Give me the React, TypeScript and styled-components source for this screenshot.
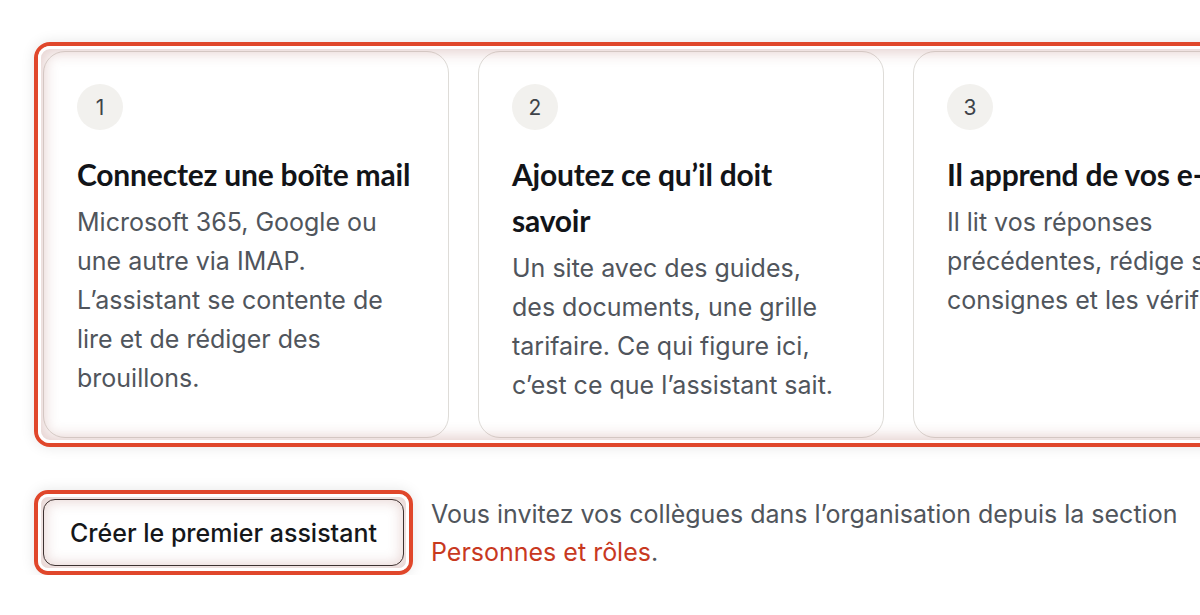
import React from "react";
import styled, { createGlobalStyle } from "styled-components";

const GlobalStyle = createGlobalStyle`
  html, body {
    margin: 0;
    padding: 0;
    background: #ffffff;
    overflow: hidden;
  }
  body {
    font-family: Inter, "Liberation Sans", sans-serif;
  }
`;

const steps = [
  {
    n: 1,
    title: "Connectez une boîte mail",
    text: "Microsoft 365, Google ou une autre via IMAP. L’assistant se contente de lire et de rédiger des brouillons.",
  },
  {
    n: 2,
    title: "Ajoutez ce qu’il doit savoir",
    text: "Un site avec des guides, des documents, une grille tarifaire. Ce qui figure ici, c’est ce que l’assistant sait.",
  },
  {
    n: 3,
    title: "Il apprend de vos e-mails",
    text: "Il lit vos réponses précédentes, rédige ses consignes et les vérifie.",
  },
];

const Page = styled.main`
  padding: 42px 0 0 34px;
  width: 1400px;
`;

const Highlight = styled.div<{ $radius: number }>`
  position: relative;
  display: inline-block;
  flex-shrink: 0;
  border: 4px solid #e0472b;
  border-radius: ${(p) => p.$radius}px;
  padding: 5px;
  box-shadow: 0 0 14px rgba(0, 0, 0, 0.1);
  &::after {
    content: "";
    position: absolute;
    inset: 0;
    border-radius: ${(p) => p.$radius - 4}px;
    pointer-events: none;
    box-shadow: inset 0 0 0 3px #ffffff, inset 0 0 14px 7px rgba(165, 95, 85, 0.28);
  }
`;

const Steps = styled.div`
  display: grid;
  grid-template-columns: repeat(3, 406px);
  gap: 29px;
`;

const Card = styled.section`
  background: #ffffff;
  border: 1px solid #dedcd8;
  border-radius: 22px;
  padding: 32px 34px 32px 33px;
`;

const Num = styled.div`
  width: 46px;
  height: 46px;
  border-radius: 50%;
  background: #f2f1ee;
  color: #3e4349;
  font-family: Inter, "Liberation Sans", sans-serif;
  font-size: 21px;
  display: flex;
  align-items: center;
  justify-content: center;
  margin-bottom: 21px;
`;

const Title = styled.h3`
  margin: 0 0 6px;
  font-family: Lato, "Noto Sans", sans-serif;
  font-weight: 700;
  font-size: 30px;
  line-height: 46px;
  letter-spacing: -0.2px;
  color: #121418;
`;

const Text = styled.p`
  margin: 0;
  font-size: 25px;
  line-height: 39px;
  color: #50555c;
`;

const Footer = styled.div`
  margin-top: 43px;
  display: flex;
  align-items: center;
  gap: 18px;
`;

const Button = styled.button`
  display: block;
  height: 67px;
  padding: 0 26px;
  border: 1.5px solid #2a2a2a;
  border-radius: 12px;
  background: #ffffff;
  font-family: Inter, "Liberation Sans", sans-serif;
  font-size: 25px;
  font-weight: 500;
  color: #15171a;
  cursor: pointer;
`;

const Note = styled.p`
  margin: 0;
  width: 760px;
  font-size: 25px;
  line-height: 38px;
  color: #50555c;
`;

const Link = styled.a`
  color: #c8391f;
  text-decoration: none;
`;

export default function App() {
  return (
    <>
      <GlobalStyle />
      <Page>
        <Highlight $radius={16}>
          <Steps>
            {steps.map((s) => (
              <Card key={s.n}>
                <Num>{s.n}</Num>
                <Title>{s.title}</Title>
                <Text>{s.text}</Text>
              </Card>
            ))}
          </Steps>
        </Highlight>
        <Footer>
          <Highlight $radius={14}>
            <Button>Créer le premier assistant</Button>
          </Highlight>
          <Note>
            Vous invitez vos collègues dans l’organisation depuis la section <Link href="#">Personnes et rôles</Link>.
          </Note>
        </Footer>
      </Page>
    </>
  );
}
